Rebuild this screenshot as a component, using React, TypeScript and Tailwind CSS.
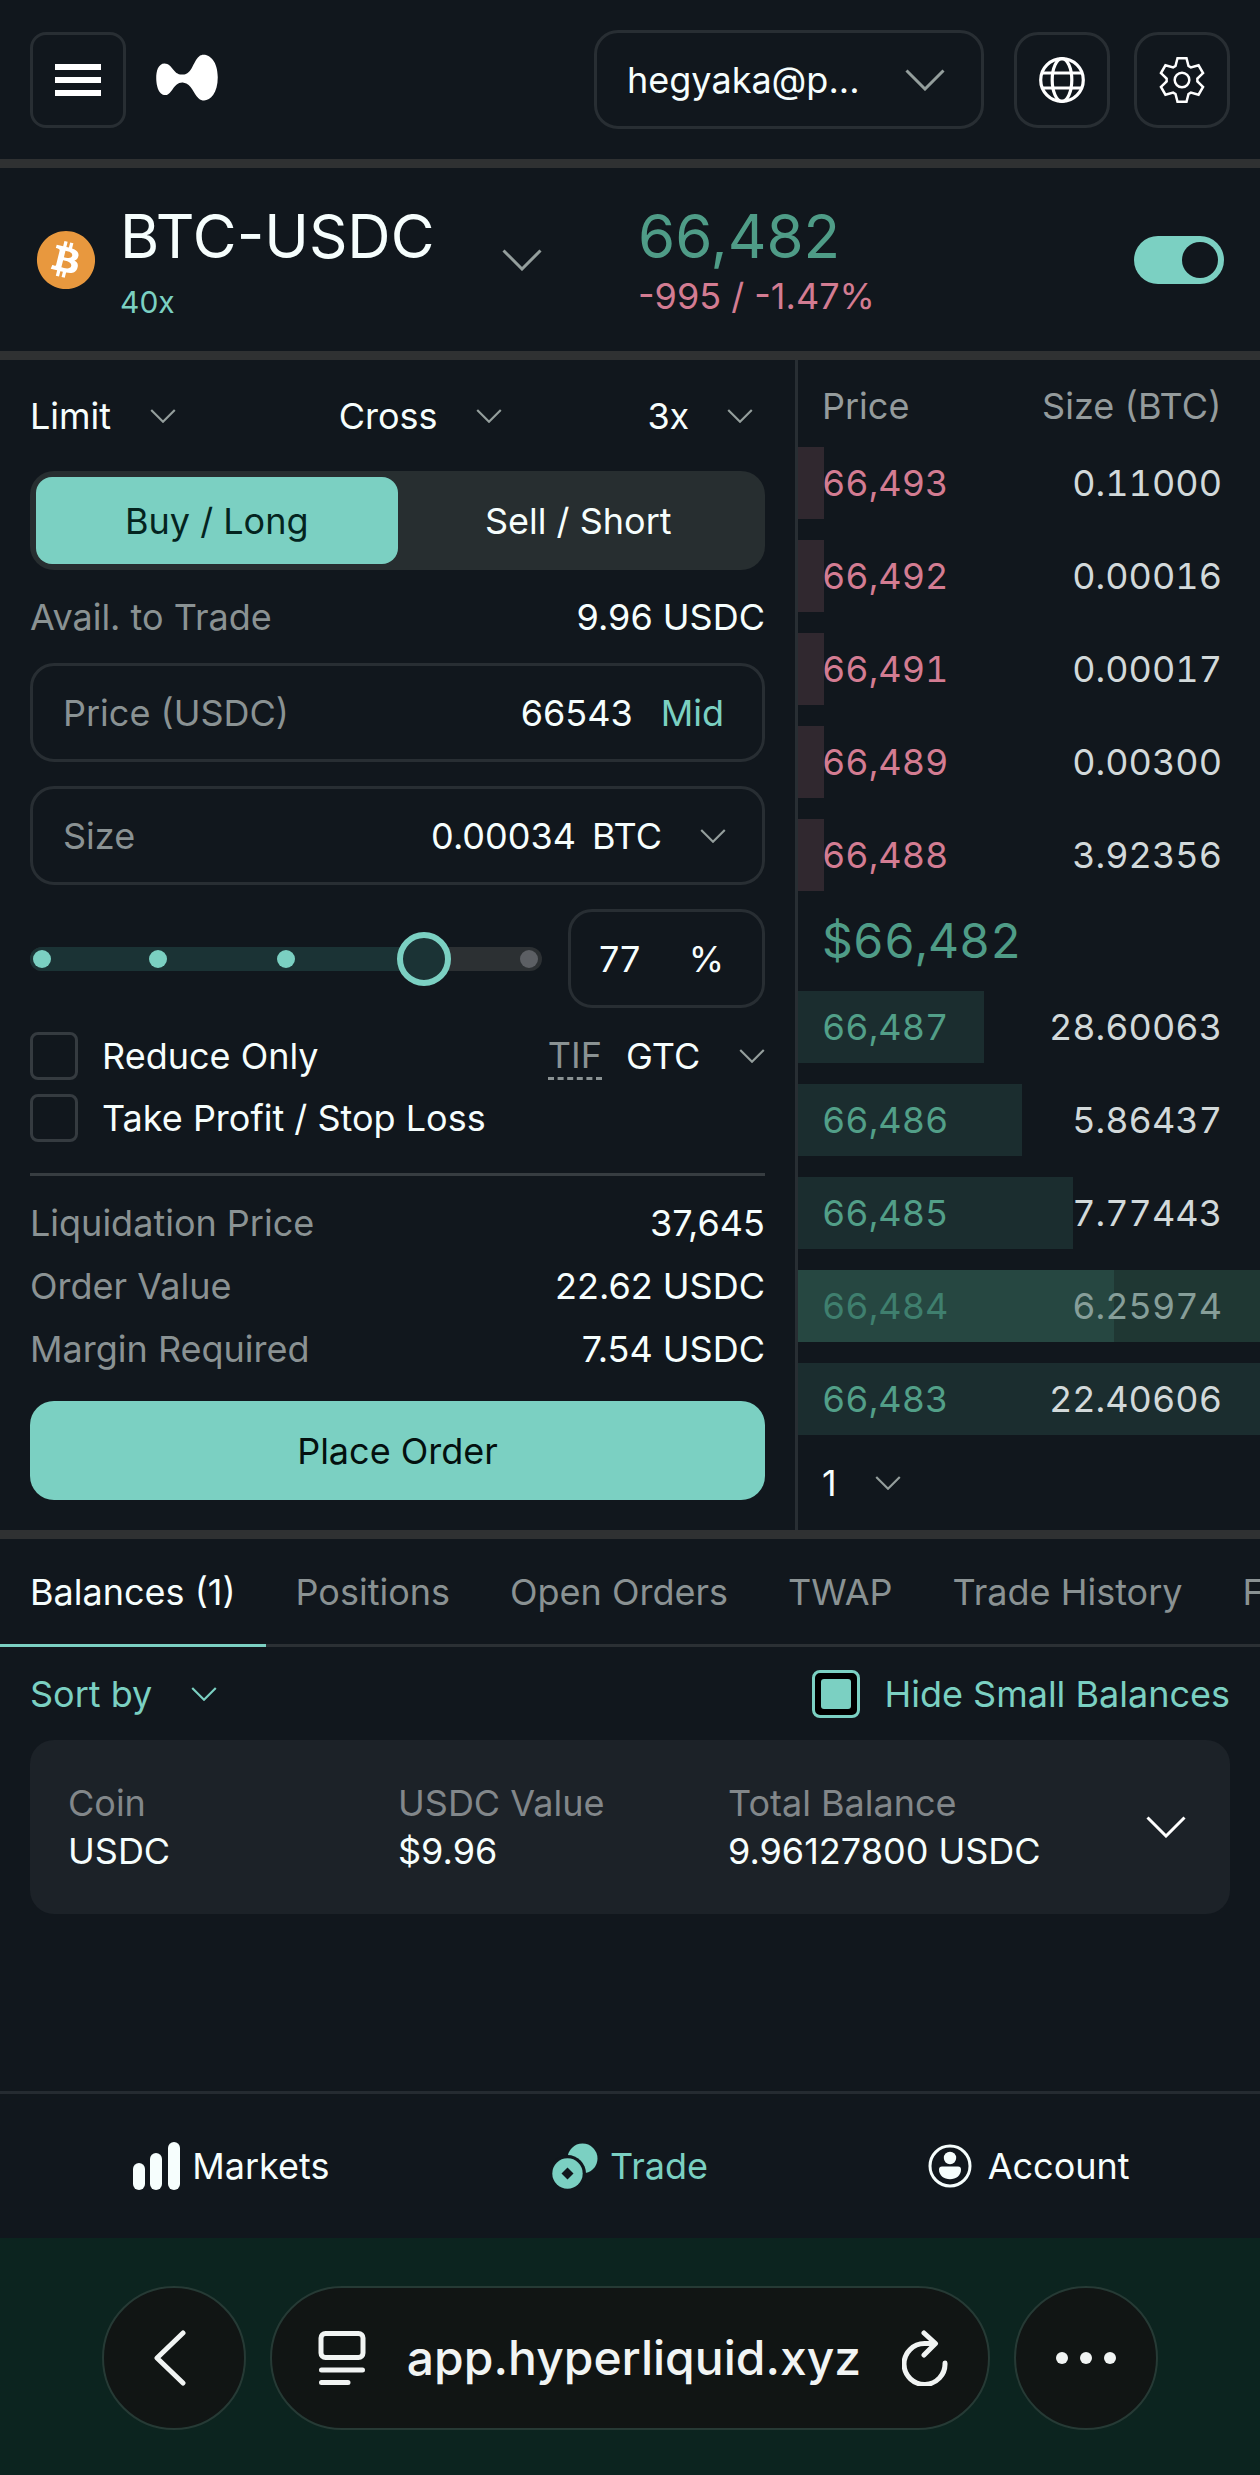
import { useState } from "react";
import type { ReactNode } from "react";
import { FaBitcoin } from "react-icons/fa";

// ---------------------------------------------------------------------------
// Data
// ---------------------------------------------------------------------------

interface Level {
  price: string;
  size: string;
  /** Depth bar width, in percent of the book width */
  depth: number;
  flash?: boolean;
}

const ASKS: Level[] = [
  { price: "66,493", size: "0.11000", depth: 5.6 },
  { price: "66,492", size: "0.00016", depth: 5.6 },
  { price: "66,491", size: "0.00017", depth: 5.6 },
  { price: "66,489", size: "0.00300", depth: 5.6 },
  { price: "66,488", size: "3.92356", depth: 5.6 },
];

const BIDS: Level[] = [
  { price: "66,487", size: "28.60063", depth: 40.2 },
  { price: "66,486", size: "5.86437", depth: 48.5 },
  { price: "66,485", size: "7.77443", depth: 59.5 },
  { price: "66,484", size: "6.25974", depth: 68.4, flash: true },
  { price: "66,483", size: "22.40606", depth: 100 },
];

const TABS = ["Balances (1)", "Positions", "Open Orders", "TWAP", "Trade History", "Funding History"];

const SUMMARY = [
  ["Liquidation Price", "37,645"],
  ["Order Value", "22.62 USDC"],
  ["Margin Required", "7.54 USDC"],
];

const BALANCE = [
  ["Coin", "USDC"],
  ["USDC Value", "$9.96"],
  ["Total Balance", "9.96127800 USDC"],
];

/** Slider stops, in percent of the track */
const STOPS = [2.4, 25, 50, 75, 97.4];

// ---------------------------------------------------------------------------
// Icons
// ---------------------------------------------------------------------------

function Chevron({ className = "text-[#949e9c]", large = false }: { className?: string; large?: boolean }) {
  return (
    <svg
      viewBox="0 0 40 22"
      fill="none"
      stroke="currentColor"
      strokeWidth={large ? 3 : 3.4}
      className={`pointer-events-none shrink-0 ${large ? "h-[22px] w-10" : "h-[14px] w-[26px]"} ${className}`}
    >
      <path d="M1.5 1.5 20 20 38.5 1.5" />
    </svg>
  );
}

function Logo() {
  return (
    <svg viewBox="0 17 144 110" className="h-[47px] w-[62px]" fill="#fff">
      <path d="M144 71.7C144 119.3 114.9 134.6 99.5 121 86.9 109.9 83.1 86.5 64.1 84 40 81 37.9 113.1 22 113.1 3.6 113.1 0 86.2 0 72.4 0 58.3 4 39.1 19.7 39.1c18.4 0 19.5 27.5 42.4 26 22.9-1.6 23.3-30.2 38.1-42.5C113.2 12.1 144 23.5 144 71.7Z" />
    </svg>
  );
}

function GlobeIcon() {
  return (
    <svg viewBox="0 0 46 46" className="size-[46px]" fill="none" stroke="#fff" strokeWidth="3.2">
      <circle cx="23" cy="23" r="21.3" />
      <ellipse cx="23" cy="23" rx="9.8" ry="21.3" />
      <path d="M3.5 16H42.5M3.5 31H42.5" />
    </svg>
  );
}

function GearIcon() {
  const tooth = [[-6.5, -14], [-4.5, -21.7], [4.5, -21.7], [6.5, -14]];
  const points = [0, 60, 120, 180, 240, 300].flatMap((deg) => {
    const a = (deg * Math.PI) / 180;
    return tooth.map(([x, y]) => `${x * Math.cos(a) - y * Math.sin(a)},${x * Math.sin(a) + y * Math.cos(a)}`);
  });
  return (
    <svg viewBox="-23 -23 46 46" className="size-[46px]" fill="none" stroke="#fff" strokeWidth="2.5">
      <polygon points={points.join(" ")} />
      <circle r="7.3" />
    </svg>
  );
}

function BarsIcon() {
  return (
    <svg viewBox="0 0 47 48" className="h-12 w-[47px]" fill="currentColor">
      <rect x="0" y="21" width="12" height="27" rx="6" />
      <rect x="17" y="11" width="12" height="37" rx="6" />
      <rect x="35" y="0" width="12" height="48" rx="6" />
    </svg>
  );
}

function CoinsIcon() {
  return (
    <svg viewBox="0 0 46 46" className="size-[46px]">
      <circle cx="30.5" cy="15.5" r="15" fill="currentColor" />
      <circle cx="15.5" cy="30.5" r="18.5" fill="#11171d" />
      <circle cx="15.5" cy="30.5" r="15.2" fill="currentColor" />
      <path d="M15.5 24.5 21.5 30.5 15.5 36.5 9.500 30.5Z" fill="#11171d" />
    </svg>
  );
}

function AccountIcon() {
  return (
    <svg viewBox="0 0 44 44" className="size-11" fill="currentColor">
      <circle cx="22" cy="22" r="20" fill="none" stroke="currentColor" strokeWidth="3" />
      <circle cx="22" cy="14" r="6.2" />
      <path d="M14 22.500H30Q33 22.500 33 25.500C33 31.500 28 35.300 22 35.300S11 31.500 11 25.500Q11 22.500 14 22.500Z" />
    </svg>
  );
}

// ---------------------------------------------------------------------------
// Form pieces
// ---------------------------------------------------------------------------

function Picker({ label, value, className = "", chevron }: { label: string; value: string; className?: string; chevron?: string }) {
  return (
    <span className={`flex items-center ${className}`}>
      <select aria-label={label} className="cursor-pointer appearance-none bg-transparent pr-16 outline-none">
        <option>{value}</option>
      </select>
      <span className="pointer-events-none -ml-[26px]">
        <Chevron className={chevron} />
      </span>
    </span>
  );
}

function Field({ id, label, value, children }: { id: string; label: string; value: string; children: ReactNode }) {
  return (
    <div className="flex h-[99px] items-center rounded-3xl border-3 border-[#282e33] px-[30px]">
      <label htmlFor={id} className="shrink-0 text-[#8a9293]">
        {label}
      </label>
      <input id={id} defaultValue={value} className="min-w-0 flex-1 bg-transparent text-right outline-none" />
      {children}
    </div>
  );
}

function Check({ label, checked = false }: { label: string; checked?: boolean }) {
  return (
    <label className="flex items-center gap-6">
      <input
        type="checkbox"
        defaultChecked={checked}
        className="grid size-12 shrink-0 appearance-none place-content-center rounded-lg border-3 border-[#353b40] before:hidden before:size-[30px] before:rounded-[3px] before:bg-[#7bd0c2] checked:border-[#7bd0c2] checked:bg-black checked:before:block"
      />
      {label}
    </label>
  );
}

function SizeSlider() {
  const [pct, setPct] = useState(77);
  return (
    <div className="flex items-center gap-[26px]">
      <div className="relative h-6 flex-1 rounded-full bg-[#2c3033]">
        <div className="h-full rounded-full bg-[#1b3335]" style={{ width: `${pct}%` }} />
        {STOPS.map((s) => (
          <span
            key={s}
            className={`absolute top-[3px] size-[18px] -translate-x-1/2 rounded-full ${s <= pct ? "bg-[#7bd0c2]" : "bg-[#5c5f64]"}`}
            style={{ left: `${s}%` }}
          />
        ))}
        <input
          type="range"
          aria-label="Size percent"
          value={pct}
          onChange={(e) => setPct(Number(e.target.value))}
          className="absolute -inset-x-[27px] -inset-y-[15px] appearance-none bg-transparent [&::-webkit-slider-thumb]:size-[54px] [&::-webkit-slider-thumb]:appearance-none [&::-webkit-slider-thumb]:rounded-full [&::-webkit-slider-thumb]:border-6 [&::-webkit-slider-thumb]:border-[#7bd0c2] [&::-webkit-slider-thumb]:bg-[#1b3335]"
        />
      </div>
      <label className="flex h-[99px] w-[197px] items-center justify-between rounded-3xl border-3 border-[#282e33] pr-[38px] pl-7">
        <input
          aria-label="Percent"
          value={pct}
          onChange={(e) => setPct(Number(e.target.value) || 0)}
          className="w-16 bg-transparent outline-none"
        />
        %
      </label>
    </div>
  );
}

// ---------------------------------------------------------------------------
// Sections
// ---------------------------------------------------------------------------

function Header() {
  const box = "grid size-24 place-items-center border-3 border-[#282e33]";
  return (
    <header className="flex h-[168px] items-center border-b-9 border-[#2f3132] px-[30px]">
      <button type="button" aria-label="Menu" className={`${box} rounded-2xl`}>
        <span className="flex w-[46px] flex-col gap-[7px]">
          <span className="h-1.5 bg-white" />
          <span className="h-1.5 bg-white" />
          <span className="h-1.5 bg-white" />
        </span>
      </button>
      <a href="#home" aria-label="Home" className="mb-1 ml-[30px]">
        <Logo />
      </a>
      <button
        type="button"
        className="ml-auto flex h-[99px] w-[390px] items-center justify-between rounded-3xl border-3 border-[#282e33] pr-9 pl-[30px]"
      >
        hegyaka@p...
        <Chevron large />
      </button>
      <button type="button" aria-label="Language" className={`${box} ml-[30px] rounded-3xl`}>
        <GlobeIcon />
      </button>
      <button type="button" aria-label="Settings" className={`${box} ml-6 rounded-3xl`}>
        <GearIcon />
      </button>
    </header>
  );
}

function PairBar() {
  return (
    <section className="flex h-48 items-center border-b-9 border-[#2f3132] px-9">
      <span className="rounded-full bg-[radial-gradient(circle,#fff_60%,transparent_62%)]">
        <FaBitcoin className="size-[60px] text-[#e8983e]" />
      </span>
      <button type="button" className="ml-6 flex w-[422px] items-center justify-between text-left">
        <span>
          <span className="block text-[60px] leading-[72px]">BTC-USDC</span>
          <span className="mt-3 block text-[30px] leading-9 text-[#7bd0c2]">40x</span>
        </span>
        <Chevron large />
      </button>
      <div className="ml-24">
        <div className="text-[60px] leading-[72px] text-[#4f9c87]">66,482</div>
        <div className="leading-[48px] text-[#d37c92]">-995 / -1.47%</div>
      </div>
      <input
        type="checkbox"
        role="switch"
        aria-label="Show order book"
        defaultChecked
        className="ml-auto h-12 w-[90px] appearance-none rounded-full bg-[#353b40] p-1.5 before:block before:size-9 before:rounded-full before:bg-[#11171d] checked:bg-[#7bd0c2] checked:before:ml-auto"
      />
    </section>
  );
}

function OrderForm() {
  return (
    <form className="flex min-w-0 flex-1 flex-col gap-6 px-[30px] pt-6 pb-[30px]" onSubmit={(e) => e.preventDefault()}>
      <div className="grid h-[63px] grid-cols-[42%_42%_auto] items-center">
        <Picker label="Order type" value="Limit" />
        <Picker label="Margin mode" value="Cross" />
        <Picker label="Leverage" value="3x" />
      </div>
      <div className="grid h-[99px] grid-cols-2 rounded-3xl bg-[#272e30] p-1.5">
        <button type="button" className="rounded-2xl bg-[#7bd0c2] text-[#04241f]">
          Buy / Long
        </button>
        <button type="button" className="rounded-2xl">
          Sell / Short
        </button>
      </div>
      <div className="flex h-[45px] items-center justify-between">
        <span className="text-[#8a9293]">Avail. to Trade</span>
        <span>9.96 USDC</span>
      </div>
      <Field id="price" label="Price (USDC)" value="66543">
        <button type="button" className="mr-2 ml-7 text-[#7bd0c2]">
          Mid
        </button>
      </Field>
      <Field id="size" label="Size" value="0.00034">
        <Picker label="Size unit" value="BTC" className="mr-1.5 ml-4" />
      </Field>
      <SizeSlider />
      <div className="flex flex-col gap-[14px]">
        <div className="flex h-12 items-center justify-between">
          <Check label="Reduce Only" />
          <span className="flex items-center gap-6">
            <abbr title="Time in force" className="border-b-3 border-dashed border-[#8a9293] text-[#8a9293] no-underline">
              TIF
            </abbr>
            <Picker label="Time in force" value="GTC" />
          </span>
        </div>
        <Check label="Take Profit / Stop Loss" />
      </div>
      <dl className="mt-[7px] border-t-3 border-[#373d41] pt-[15px]">
        {SUMMARY.map(([name, value]) => (
          <div key={name} className="flex h-[63px] items-center justify-between">
            <dt className="text-[#8a9293]">{name}</dt>
            <dd>{value}</dd>
          </div>
        ))}
      </dl>
      <button type="submit" className="-mt-[3px] h-[99px] rounded-3xl bg-[#7bd0c2] text-[#04100f]">
        Place Order
      </button>
    </form>
  );
}

function BookRow({ level, side }: { level: Level; side: "ask" | "bid" }) {
  const bar = side === "ask" ? "#30282f" : level.flash ? "#264741" : "#1b2d2f";
  const rest = level.flash ? "#1f3733" : "transparent";
  const priceColor = side === "ask" ? "text-[#d37c92]" : level.flash ? "text-[#3f7f6e]" : "text-[#529f88]";
  return (
    <tr
      className="h-[72px]"
      style={{ background: `linear-gradient(to right, ${bar} ${level.depth}%, ${rest} ${level.depth}%)` }}
    >
      <td className={`pl-6 ${priceColor}`}>{level.price}</td>
      <td className={`pr-[38px] text-right ${level.flash ? "text-[#869e99]" : "text-[#d2d9da]"}`}>{level.size}</td>
    </tr>
  );
}

function OrderBook() {
  return (
    <section className="w-[465px] shrink-0 border-l-3 border-[#282e33] pt-1.5">
      <table className="w-full border-separate border-spacing-x-0 border-spacing-y-[21px] tabular-nums">
        <thead>
          <tr className="h-[39px] leading-[39px] text-[#949b9c]">
            <th className="pl-6 text-left font-normal">Price</th>
            <th className="pr-[38px] text-right font-normal">Size (BTC)</th>
          </tr>
        </thead>
        <tbody>
          {ASKS.map((l) => (
            <BookRow key={l.price} level={l} side="ask" />
          ))}
          <tr className="h-[58px]">
            <td colSpan={2} className="pl-6 text-[48px] leading-[58px] text-[#4f9c87]">
              $66,482
            </td>
          </tr>
          {BIDS.map((l) => (
            <BookRow key={l.price} level={l} side="bid" />
          ))}
        </tbody>
      </table>
      <Picker label="Price grouping" value="1" className="h-[54px] pl-6" />
    </section>
  );
}

function Balances() {
  return (
    <section className="flex-1">
      <div role="tablist" className="flex overflow-hidden shadow-[inset_0_-3px_0_#2b3034]">
        {TABS.map((tab, i) => (
          <button
            key={tab}
            type="button"
            role="tab"
            aria-selected={i === 0}
            className={`h-[108px] shrink-0 border-b-3 px-[30px] whitespace-nowrap ${i === 0 ? "border-[#7bd0c2]" : "border-transparent text-[#8a9293]"}`}
          >
            {tab}
          </button>
        ))}
      </div>
      <div className="flex h-[93px] items-center justify-between px-[30px] text-[#7bd0c2]">
        <Picker label="Sort by" value="Sort by" chevron="text-[#7bd0c2]" />
        <Check label="Hide Small Balances" checked />
      </div>
      <div className="mx-[30px] flex h-[174px] items-center justify-between rounded-3xl bg-[#1c2228] pr-11 pl-[38px]">
        <dl className="grid grid-cols-[330px_330px_auto] leading-[48px]">
          {BALANCE.map(([name, value]) => (
            <div key={name}>
              <dt className="text-[#82878a]">{name}</dt>
              <dd>{value}</dd>
            </div>
          ))}
        </dl>
        <button type="button" aria-label="Expand balance">
          <Chevron large className="text-white" />
        </button>
      </div>
    </section>
  );
}

function BottomNav() {
  return (
    <nav className="grid grid-cols-3 border-t-3 border-[#252b31] px-8">
      <a href="#markets" className="flex h-36 items-center justify-center gap-3">
        <BarsIcon />
        Markets
      </a>
      <a href="#trade" className="flex h-36 items-center justify-center gap-3 text-[#7bd0c2]">
        <CoinsIcon />
        Trade
      </a>
      <a href="#account" className="flex h-36 items-center justify-center gap-4">
        <AccountIcon />
        Account
      </a>
    </nav>
  );
}

function BrowserBar() {
  const round = "grid size-36 shrink-0 place-items-center rounded-full border-2 border-[#263a35] bg-[#111514]";
  return (
    <footer className="flex gap-6 bg-[#0c241f] px-[102px] pt-12 pb-[45px] text-[#f1f4f3]">
      <button type="button" aria-label="Back" className={round}>
        <svg viewBox="0 0 56 56" className="size-14" fill="none" stroke="currentColor" strokeWidth="5" strokeLinecap="round" strokeLinejoin="round">
          <path d="M37 3 11 28 37 53" />
        </svg>
      </button>
      <div className="flex h-36 min-w-0 flex-1 items-center justify-between rounded-full border-2 border-[#263a35] bg-[#111514] pr-10 pl-[46px] text-[48px] font-medium">
        <svg viewBox="0 0 48 54" className="h-[54px] w-12" fill="none" stroke="currentColor" strokeWidth="5" strokeLinecap="round">
          <rect x="3" y="2.5" width="42" height="24" rx="4.5" />
          <path d="M3.5 39H44.5M3.5 51.5H30" />
        </svg>
        app.hyperliquid.xyz
        <button type="button" aria-label="Reload">
          <svg viewBox="0 0 46 56" className="h-14 w-[46px]" fill="none" stroke="currentColor" strokeWidth="5" strokeLinecap="round" strokeLinejoin="round">
            <path d="M43 33A20.5 20.5 0 1 1 22.5 13.500H33M22 3 33.5 13.500 22 25" />
          </svg>
        </button>
      </div>
      <button type="button" aria-label="More" className={round}>
        <span className="flex gap-3">
          <span className="size-3 rounded-full bg-current" />
          <span className="size-3 rounded-full bg-current" />
          <span className="size-3 rounded-full bg-current" />
        </span>
      </button>
    </footer>
  );
}

export default function App() {
  return (
    <div className="flex min-h-screen flex-col bg-[#11171d] font-['Inter',sans-serif] text-[36px] leading-[44px] text-[#f6fefd]">
      <Header />
      <PairBar />
      <div className="flex border-b-9 border-[#2f3132]">
        <OrderForm />
        <OrderBook />
      </div>
      <Balances />
      <BottomNav />
      <BrowserBar />
    </div>
  );
}
